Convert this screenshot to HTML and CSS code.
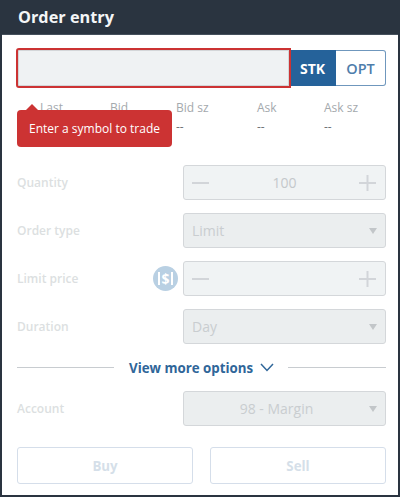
FILE: index.html
```html
<!DOCTYPE html>
<html lang="en">
<head>
<meta charset="utf-8">
<title>Order entry</title>
<link rel="stylesheet" href="styles.css">
</head>
<body>
<main class="panel">
  <header class="panel-head"><h1 class="panel-title">Order entry</h1></header>
  <div class="panel-body">
    <div class="symbol-row">
      <input class="symbol-input" type="text" aria-label="Symbol">
      <div class="seg">
        <span class="seg-btn seg-on">STK</span>
        <span class="seg-btn seg-off">OPT</span>
      </div>
      <div class="tip">Enter a symbol to trade</div>
    </div>
    <div class="quotes">
      <div class="quote"><span class="q-label">Last</span><span class="q-val">--</span></div>
      <div class="quote"><span class="q-label">Bid</span><span class="q-val">--</span></div>
      <div class="quote"><span class="q-label">Bid sz</span><span class="q-val">--</span></div>
      <div class="quote"><span class="q-label">Ask</span><span class="q-val">--</span></div>
      <div class="quote"><span class="q-label">Ask sz</span><span class="q-val">--</span></div>
    </div>
    <div class="form-rows">
      <div class="row">
        <span class="row-label">Quantity</span>
        <div class="field stepper">
          <svg class="step-icon" viewBox="0 0 18 18"><path d="M0 9H17"/></svg>
          <span class="step-val">100</span>
          <svg class="step-icon" viewBox="0 0 18 18"><path d="M0 9H17M8.5 1V17"/></svg>
        </div>
      </div>
      <div class="row">
        <span class="row-label">Order type</span>
        <div class="field select"><span>Limit</span><i class="caret"></i></div>
      </div>
      <div class="row">
        <span class="row-label">Limit price</span>
        <span class="dollar">$</span>
        <div class="field stepper">
          <svg class="step-icon" viewBox="0 0 18 18"><path d="M0 9H17"/></svg>
          <svg class="step-icon" viewBox="0 0 18 18"><path d="M0 9H17M8.5 1V17"/></svg>
        </div>
      </div>
      <div class="row">
        <span class="row-label">Duration</span>
        <div class="field select"><span>Day</span><i class="caret"></i></div>
      </div>
    </div>
    <div class="more">
      <span class="more-line"></span>
      <span class="more-link">View more options
        <svg class="more-chev" viewBox="0 0 14 9"><path d="M1 1L7 7.5L13 1"/></svg>
      </span>
      <span class="more-line"></span>
    </div>
    <div class="row">
      <span class="row-label">Account</span>
      <div class="field select select-center"><span class="select-text">98 - Margin</span><i class="caret"></i></div>
    </div>
    <div class="actions">
      <button class="action" type="button">Buy</button>
      <button class="action" type="button">Sell</button>
    </div>
  </div>
</main>
</body>
</html>
```
FILE: styles.css
```css
* { box-sizing: border-box; }
html, body { margin: 0; padding: 0; }
body {
  width: 400px;
  height: 497px;
  background: #2a3440;
  font-family: "Open Sans", "Noto Sans", sans-serif;
  overflow: hidden;
}
.panel {
  height: 495px;
  padding: 0 2px;
  display: flex;
  flex-direction: column;
}
.panel-head {
  height: 35px;
  padding: 0 16px;
  display: flex;
  align-items: center;
  border-bottom: 1px solid #45505c;
}
.panel-title {
  margin: 0;
  font-size: 16.3px;
  font-weight: 700;
  color: #f4f6f7;
}
.panel-body {
  flex: 1;
  background: #fff;
  padding: 13px 12px 0 14px;
}
.symbol-row {
  display: flex;
  align-items: center;
  height: 40px;
  position: relative;
}
.symbol-input {
  width: 275px;
  height: 40px;
  background: #eff2f3;
  border: 2px solid #cc3333;
  border-radius: 3px 0 0 3px;
  box-shadow: inset 0 0 0 1px #d3d6d8;
  padding: 0;
}
.seg { display: flex; height: 36px; }
.seg-btn {
  display: flex;
  align-items: center;
  justify-content: center;
  font-size: 14.5px;
  font-weight: 600;
}
.seg-on {
  width: 45px;
  padding-right: 2px;
  background: #25629a;
  color: #fff;
  font-weight: 700;
  font-size: 14px;
}
.seg-off {
  width: 50px;
  color: #4e7dab;
  border: 1px solid #6f97bd;
  border-left: none;
  border-radius: 0 3px 3px 0;
}
.tip {
  position: absolute;
  left: 1px;
  top: 62px;
  width: 155px;
  height: 37px;
  background: #cc3333;
  color: #fff;
  border-radius: 4px;
  font-size: 12px;
  line-height: 37px;
  text-align: center;
}
.tip::before {
  content: "";
  position: absolute;
  left: 9px;
  top: -6px;
  border-left: 6px solid transparent;
  border-right: 6px solid transparent;
  border-bottom: 6px solid #cc3333;
}
.quotes {
  display: grid;
  grid-template-columns: 70px 66px 81px 67px auto;
  padding: 11px 0 0 24px;
  height: 64px;
}
.quote { display: flex; flex-direction: column; gap: 2px; }
.q-label { font-size: 12px; line-height: 17px; color: #a4a9ad; }
.q-val { font-size: 12px; line-height: 17px; color: #6f7478; }
.form-rows { display: flex; flex-direction: column; gap: 13px; margin-top: 13px; }
.row { display: flex; align-items: center; height: 35px; padding-left: 1px; }
.row-label { font-size: 12px; color: #dcdfe1; font-weight: 600; flex: 1; }
.field {
  width: 203px;
  height: 35px;
  border: 1px solid #d4d7da;
  border-radius: 3px;
  display: flex;
  align-items: center;
  font-size: 14px;
  color: #c9cdd0;
}
.stepper { background: #f0f3f4; justify-content: space-between; padding: 0 8px; position: relative; }
.step-icon { width: 18px; height: 18px; fill: none; stroke: #d2d5d9; stroke-width: 2; }
.step-val { font-size: 14px; color: #c4c8cb; }
.select { background: #ebeeef; justify-content: space-between; padding: 0 8px 0 8px; }
.select-center { position: relative; }
.select-text { flex: 1; text-align: center; padding-right: 8px; }
.caret {
  width: 0;
  height: 0;
  border-left: 4.5px solid transparent;
  border-right: 4.5px solid transparent;
  border-top: 6px solid #c2c6c9;
}
.dollar {
  width: 25px;
  height: 25px;
  margin-right: 5px;
  border-radius: 50%;
  background: #b9d0e3;
  color: #fff;
  font-size: 14px;
  font-weight: 700;
  line-height: 25px;
  text-align: center;
  position: relative;
}
.dollar::before, .dollar::after {
  content: "";
  position: absolute;
  top: 6px;
  height: 13px;
  width: 2px;
  background: #fff;
}
.dollar::before { left: 5px; }
.dollar::after { right: 5px; }
.more {
  display: flex;
  align-items: center;
  height: 47px;
  padding-left: 1px;
}
.more-line { height: 1px; background: #c8ccd0; flex: 1; }
.more-line:first-child { flex: 0 0 97px; }
.more-link {
  display: flex;
  align-items: center;
  gap: 7px;
  margin: 0 14px 0 15px;
  font-size: 13.3px;
  font-weight: 700;
  color: #2f6699;
  white-space: nowrap;
}
.more-chev { width: 14px; height: 9px; fill: none; stroke: #2f6699; stroke-width: 1.5; }
.actions {
  display: flex;
  gap: 17px;
  margin-top: 21px;
  padding-left: 1px;
}
.action {
  flex: 1;
  height: 37px;
  background: #fff;
  border: 1px solid #d5deea;
  border-radius: 3px;
  font-family: inherit;
  font-size: 13.3px;
  font-weight: 700;
  color: #d5dfe9;
  padding: 0;
}
```
